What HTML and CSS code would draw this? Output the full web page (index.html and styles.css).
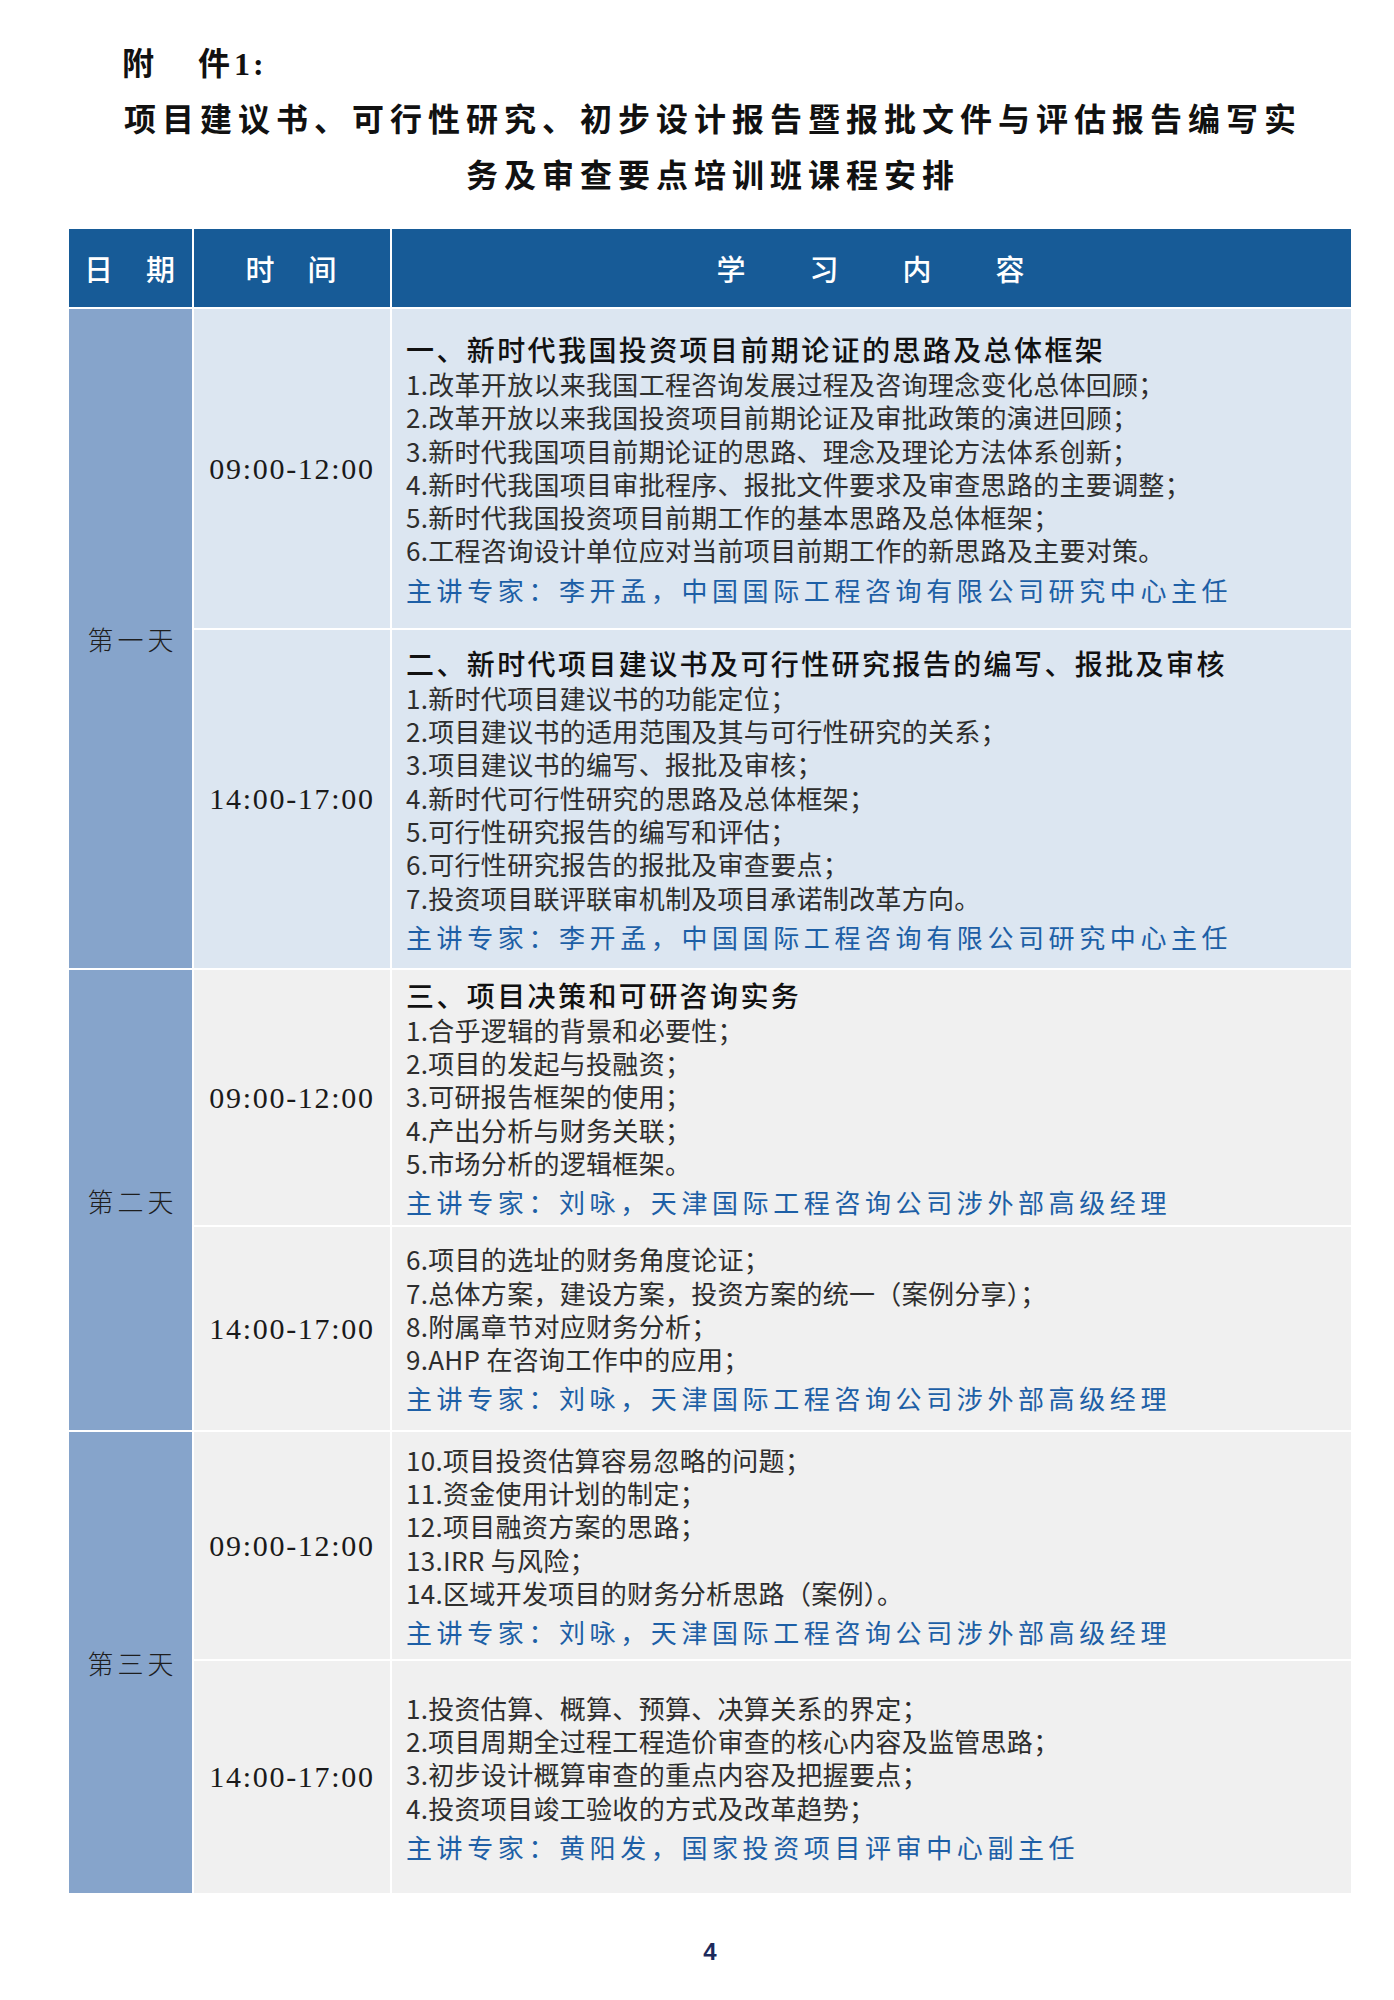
FILE: index.html
```html
<!DOCTYPE html>
<html lang="zh-CN">
<head>
<meta charset="utf-8">
<title>附件1 课程安排</title>
<link rel="stylesheet" href="styles.css">
</head>
<body>
<div class="page">
  <div class="title">
    <div class="title-first">附　件<span class="latin">1:</span></div>
    <div class="title-main">项目建议书、可行性研究、初步设计报告暨报批文件与评估报告编写实<br>务及审查要点培训班课程安排</div>
  </div>

  <div class="schedule">
    <div class="hd">日　期</div>
    <div class="hd">时　间</div>
    <div class="hd">学　　习　　内　　容</div>

    <div class="day day-1">第一天</div>
    <div class="time blue r1">09:00-12:00</div>
    <div class="content blue r1">
      <div class="heading">一、新时代我国投资项目前期论证的思路及总体框架</div>
      <div class="item">1.改革开放以来我国工程咨询发展过程及咨询理念变化总体回顾；</div>
      <div class="item">2.改革开放以来我国投资项目前期论证及审批政策的演进回顾；</div>
      <div class="item">3.新时代我国项目前期论证的思路、理念及理论方法体系创新；</div>
      <div class="item">4.新时代我国项目审批程序、报批文件要求及审查思路的主要调整；</div>
      <div class="item">5.新时代我国投资项目前期工作的基本思路及总体框架；</div>
      <div class="item">6.工程咨询设计单位应对当前项目前期工作的新思路及主要对策。</div>
      <div class="speaker">主讲专家：李开孟，中国国际工程咨询有限公司研究中心主任</div>
    </div>

    <div class="time blue r2">14:00-17:00</div>
    <div class="content blue r2">
      <div class="heading">二、新时代项目建议书及可行性研究报告的编写、报批及审核</div>
      <div class="item">1.新时代项目建议书的功能定位；</div>
      <div class="item">2.项目建议书的适用范围及其与可行性研究的关系；</div>
      <div class="item">3.项目建议书的编写、报批及审核；</div>
      <div class="item">4.新时代可行性研究的思路及总体框架；</div>
      <div class="item">5.可行性研究报告的编写和评估；</div>
      <div class="item">6.可行性研究报告的报批及审查要点；</div>
      <div class="item">7.投资项目联评联审机制及项目承诺制改革方向。</div>
      <div class="speaker">主讲专家：李开孟，中国国际工程咨询有限公司研究中心主任</div>
    </div>

    <div class="day day-2">第二天</div>
    <div class="time gray r3">09:00-12:00</div>
    <div class="content gray r3">
      <div class="heading">三、项目决策和可研咨询实务</div>
      <div class="item">1.合乎逻辑的背景和必要性；</div>
      <div class="item">2.项目的发起与投融资；</div>
      <div class="item">3.可研报告框架的使用；</div>
      <div class="item">4.产出分析与财务关联；</div>
      <div class="item">5.市场分析的逻辑框架。</div>
      <div class="speaker">主讲专家：刘咏，天津国际工程咨询公司涉外部高级经理</div>
    </div>

    <div class="time gray r4">14:00-17:00</div>
    <div class="content gray r4">
      <div class="item">6.项目的选址的财务角度论证；</div>
      <div class="item">7.总体方案，建设方案，投资方案的统一（案例分享）；</div>
      <div class="item">8.附属章节对应财务分析；</div>
      <div class="item">9.AHP 在咨询工作中的应用；</div>
      <div class="speaker">主讲专家：刘咏，天津国际工程咨询公司涉外部高级经理</div>
    </div>

    <div class="day day-3">第三天</div>
    <div class="time gray r5">09:00-12:00</div>
    <div class="content gray r5">
      <div class="item">10.项目投资估算容易忽略的问题；</div>
      <div class="item">11.资金使用计划的制定；</div>
      <div class="item">12.项目融资方案的思路；</div>
      <div class="item">13.IRR 与风险；</div>
      <div class="item">14.区域开发项目的财务分析思路（案例）。</div>
      <div class="speaker">主讲专家：刘咏，天津国际工程咨询公司涉外部高级经理</div>
    </div>

    <div class="time gray r6">14:00-17:00</div>
    <div class="content gray r6">
      <div class="item">1.投资估算、概算、预算、决算关系的界定；</div>
      <div class="item">2.项目周期全过程工程造价审查的核心内容及监管思路；</div>
      <div class="item">3.初步设计概算审查的重点内容及把握要点；</div>
      <div class="item">4.投资项目竣工验收的方式及改革趋势；</div>
      <div class="speaker">主讲专家：黄阳发，国家投资项目评审中心副主任</div>
    </div>
  </div>

  <div class="page-num">4</div>
</div>
</body>
</html>
```

FILE: styles.css
```css
html, body {
  margin: 0;
  padding: 0;
  background: #ffffff;
}

body {
  font-family: "Noto Sans CJK SC", "Noto Sans", sans-serif;
  color: #222222;
}

.page {
  width: 1282px;
  margin-left: 69px;
  padding-top: 33px;
}

/* ---------- title ---------- */
.title {
  font-size: 32px;
  line-height: 56px;
  font-weight: 700;
  letter-spacing: 6px;
  color: #111111;
}

.title-first {
  padding-left: 53px;
}

.title-first .latin {
  font-family: "Liberation Serif", serif;
  line-height: 1;
  letter-spacing: 3px;
  margin-left: -2px;
}

.title-main {
  text-align: center;
  padding-left: 6px;
}

/* ---------- schedule grid ---------- */
.schedule {
  margin-top: 28px;
  display: grid;
  grid-template-columns: 123px 196px 1fr;
  grid-template-rows: 78px 319px 338px 255px 203px 227px 232px;
  gap: 2px;
  background: #ffffff;
}

.hd {
  background: #175b97;
  color: #ffffff;
  font-size: 29px;
  font-weight: 500;
  letter-spacing: 2px;
  display: flex;
  align-items: center;
  justify-content: center;
  white-space: pre;
}

.day {
  background: #86a4cb;
  grid-row: span 2;
  display: flex;
  align-items: center;
  justify-content: center;
  font-size: 26px;
  font-weight: 300;
  letter-spacing: 4px;
  padding-left: 4px;
  color: #1e1e1e;
}

.blue { background: #dce6f1; }
.gray { background: #f0f0f0; }

.time {
  display: flex;
  align-items: center;
  justify-content: center;
  font-family: "Liberation Serif", "Times New Roman", serif;
  font-size: 30px;
  letter-spacing: 1.7px;
  color: #1a1a1a;
}

.content {
  display: flex;
  flex-direction: column;
  justify-content: center;
  padding: 0 14px;
}

.heading {
  font-size: 28px;
  line-height: 36px;
  font-weight: 500;
  letter-spacing: 2.4px;
  color: #111111;
  white-space: nowrap;
}

.item {
  font-size: 26px;
  line-height: 33.3px;
  letter-spacing: 0.3px;
  color: #2e2e2e;
  white-space: nowrap;
}

.speaker {
  margin-top: 6px;
  font-size: 26px;
  line-height: 33.3px;
  letter-spacing: 4.6px;
  color: #1d5fa6;
  white-space: nowrap;
}

/* ---------- page number ---------- */
.page-num {
  margin-top: 45px;
  text-align: center;
  font-family: "Liberation Sans", Arial, sans-serif;
  font-size: 24px;
  line-height: 28px;
  font-weight: 700;
  color: #1c2a5c;
}
```
